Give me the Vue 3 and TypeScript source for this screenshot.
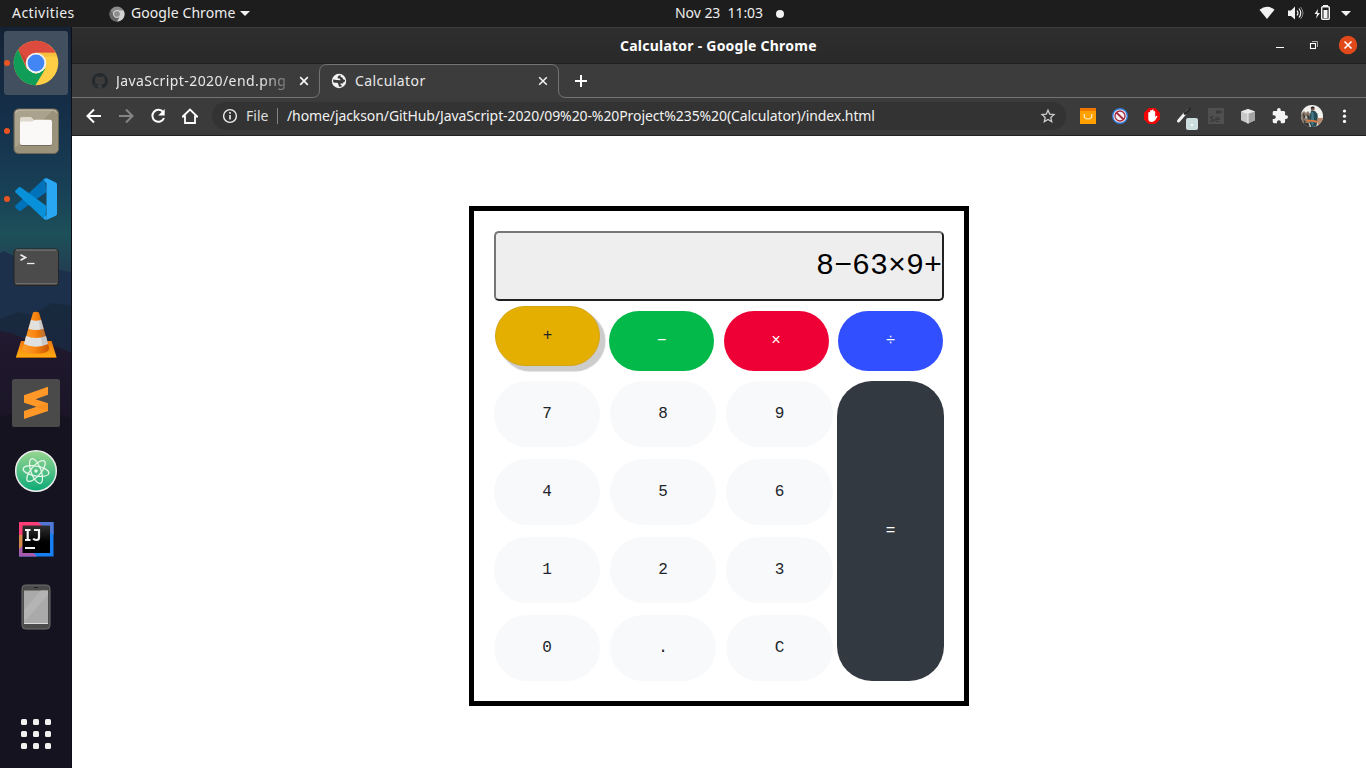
<script setup lang="ts">
import { ref } from 'vue'

interface Operator {
  symbol: string
  tone: string
  raised?: boolean
}

const display = ref<string>('8−63×9+')

const operators: Operator[] = [
  { symbol: '+', tone: 'yellow', raised: true },
  { symbol: '−', tone: 'green' },
  { symbol: '×', tone: 'red' },
  { symbol: '÷', tone: 'blue' },
]

const keys: string[] = ['7', '8', '9', '4', '5', '6', '1', '2', '3', '0', '.', 'C']

function press(key: string): void {
  display.value = key === 'C' ? '' : display.value + key
}
</script>

<template>
  <div class="desktop">
    <header class="topbar">
      <span class="activities">Activities</span>
      <svg class="app-icon" width="16" height="16" viewBox="0 0 16 16">
        <circle cx="8" cy="8" r="7.5" fill="#8b8b8b" />
        <path d="M8 4.5h6.7A7.5 7.5 0 0 1 8 15.5l3-5.700z" fill="#d2d2d2" />
        <path d="M1.600 4A7.500 7.500 0 0 0 8 15.500l3-5.700-6 .2z" fill="#656565" />
        <circle cx="8" cy="8" r="3.500" fill="#8d8d8d" stroke="#ddd" stroke-width="1" />
      </svg>
      <span class="app-name">Google Chrome</span>
      <svg class="caret" width="10" height="5" viewBox="0 0 10 5"><path d="M0 0h10L5 5z" fill="#f2f2f2" /></svg>
      <span class="clock">Nov 23&nbsp; 11:03</span>
      <i class="notice"></i>
      <svg class="tray" width="110" height="27" viewBox="0 0 110 27" fill="#f2f2f2">
        <path d="M3.500 9.800Q11 3.500 18.500 9.800L11 19z" />
        <path d="M32 10.500h3l4-4v13l-4-3.500h-3z" />
        <path d="M41 10.500q2 2.500 0 5M43 8.500q3.500 4.500 0 9" fill="none" stroke="#f2f2f2" stroke-width="1.200" />
        <path d="M44.500 7q5 6 0 12" fill="none" stroke="#858585" />
        <path d="M62 9l-3.500 5H61l-1 4.500 4-5.500h-2.500z" />
        <path d="M67 5.500h5" stroke="#f2f2f2" />
        <rect x="65.700" y="6.700" width="7.600" height="12.600" rx="1" fill="none" stroke="#f2f2f2" stroke-width="1.400" />
        <path d="M67.500 10h4v8h-4zM85 11h10l-5 5z" />
      </svg>
    </header>

    <div class="workspace">
      <nav class="dock">
        <svg class="wallpaper" width="72" height="741" viewBox="0 0 72 741">
          <defs>
            <linearGradient id="sky" x2="0" y2="1">
              <stop offset="0" stop-color="#152235" /><stop offset=".12" stop-color="#152f49" />
              <stop offset=".22" stop-color="#184056" /><stop offset=".28" stop-color="#1d5059" />
              <stop offset=".33" stop-color="#233e52" /><stop offset=".4" stop-color="#292b45" />
              <stop offset=".52" stop-color="#181526" /><stop offset="1" stop-color="#141420" />
            </linearGradient>
            <linearGradient id="hill" x2="0" y2="1"><stop offset="0" stop-color="#172a3d" /><stop offset="1" stop-color="#1c2440" /></linearGradient>
            <linearGradient id="ridge" x2="0" y2="1"><stop offset="0" stop-color="#211a30" /><stop offset=".7" stop-color="#1b1527" /><stop offset="1" stop-color="#151420" /></linearGradient>
          </defs>
          <rect width="72" height="741" fill="url(#sky)" />
          <path d="M0 226l4-2 12 6 12-1 12 9 32 8v60H0z" fill="#1c304b" />
          <path d="M0 292l18-7 14 3 20-12 20 3v70H0z" fill="url(#hill)" />
          <path d="M0 304l12 2 12 6 18 2 30 12v100H0z" fill="url(#ridge)" />
          <path d="M0 390l40-10 32 12v349H0z" fill="#14131f" />
        </svg>

        <div class="slot active running">
          <svg viewBox="0 0 64 64">
            <circle cx="32" cy="32" r="22.300" fill="#ffce44" />
            <path d="M14.200 18.500A22.300 22.300 0 0 1 51.700 21.800H32l-9.500 15.500z" fill="#dd4b3e" />
            <path d="M14.200 18.500A22.300 22.300 0 0 0 31.500 54.300L41.500 37.500 32 43 22.500 37.500z" fill="#0f9d58" />
            <path d="M14.200 18.500l8.500 16.300L22.500 29z" fill="#a93027" opacity=".45" />
            <path d="M32 21.800h19.700l1.300 3.500-15 .5z" fill="#e5ae32" opacity=".45" />
            <circle cx="32" cy="32" r="10.300" fill="#f3f3f3" /><circle cx="32" cy="32" r="8.400" fill="#4285f4" />
          </svg>
        </div>
        <div class="slot running">
          <svg viewBox="0 0 64 64">
            <rect x="10" y="10" width="44.500" height="44.500" rx="4.500" fill="#9b927b" stroke="#6d6655" />
            <path d="M11 15q0-4 4-4h34L11 49z" fill="#aaa28d" />
            <path d="M11.500 14q1-3 4-3h33q3.500 0 4 3" fill="none" stroke="#c8c1ad" />
            <path d="M16 31V20q0-2 2-2h9l3 3v9z" fill="#ded9cc" />
            <path d="M16 24q0-1.500 2-1.500h10l3-1.700h15q2 0 2 2V44q0 2-2 2H18q-2 0-2-2z" fill="#faf9f7" />
            <path d="M17 46.500h30" stroke="#766f5e" />
          </svg>
        </div>
        <div class="slot running">
          <svg viewBox="0 0 64 64">
            <path d="M41 11L11.500 38.500q-1 1 0 2l3 3q1.500.9 2.500 0L42.500 25z" fill="#0072b9" />
            <path d="M41 53L11.500 25.500q-1-1 0-2l3-3q1.500-.9 2.500 0L42.500 39z" fill="#0890d8" />
            <path d="M42.500 53l9.300-4.300q1.200-.7 1.200-2V17.500q0-1.500-1.200-2L42.500 11l-3 1.500 3 4z" fill="#2aa7f3" />
            <path d="M42.500 53l-3-1.500 3-4z" fill="#2aa7f3" />
          </svg>
        </div>
        <div class="slot">
          <svg viewBox="0 0 64 64">
            <rect x="10" y="14" width="44.500" height="36.500" rx="3" fill="#4b4b4b" stroke="#252525" />
            <path d="M12 15h40.500" stroke="#858585" /><path d="M11.500 48.500h41.500" stroke="#6b6b6b" />
            <path d="M16.500 19.800l5 2.700-5 2.700" fill="none" stroke="#eee" stroke-width="1.700" /><path d="M23 28.500h7.500" stroke="#eee" stroke-width="1.300" />
          </svg>
        </div>
        <div class="slot">
          <svg viewBox="0 0 64 64">
            <defs>
              <linearGradient id="cone"><stop stop-color="#ff9c2b" /><stop offset=".45" stop-color="#f88712" /><stop offset="1" stop-color="#c95500" /></linearGradient>
              <linearGradient id="base" x2="0" y2="1"><stop stop-color="#f27a0d" /><stop offset="1" stop-color="#ffae13" /></linearGradient>
            </defs>
            <path d="M17 38h30.500l5 16q0 1-1 1H13q-1 0-1-1z" fill="url(#base)" /><path d="M12 54.500h40" stroke="#bb6900" />
            <path d="M29 9.500q3-1.500 6 0l10 35q1 6-13 6t-13-6z" fill="url(#cone)" />
            <path d="M27 16.700q5 2 10 0l2.600 9q-7.600 2.600-15.200 0z" fill="#e0e0df" />
            <path d="M22 33q10 4 20 0l2 8q-12 5.500-24 0z" fill="#dfe0e0" />
            <path d="M35 17.500l2-.8 7 24.300-6 2z" fill="#8e8e8e" opacity=".28" />
          </svg>
        </div>
        <div class="slot">
          <svg viewBox="0 0 64 64">
            <rect x="8" y="8" width="48" height="48" rx="2.500" fill="#4a4a4a" />
            <path d="M20 24.300L44 15.700v8L31.500 28.300 44 32.300V40L20 48v-8l12.500-4.300L20 31.700z" fill="#ff9827" />
            <path d="M32.500 35.700L44 32.300V38l-4 1z" fill="#e78217" opacity=".35" />
          </svg>
        </div>
        <div class="slot">
          <svg viewBox="0 0 64 64">
            <defs><linearGradient id="atom" x2="0" y2="1"><stop stop-color="#9ad690" /><stop offset="1" stop-color="#0baa78" /></linearGradient></defs>
            <circle cx="32" cy="32" r="20.300" fill="url(#atom)" stroke="#ebedeb" stroke-width="1.500" />
            <g fill="none" stroke="#e7f8e9" stroke-width="1.250"><ellipse cx="32" cy="32" rx="13" ry="5" transform="rotate(10 32 32)" /><ellipse cx="32" cy="32" rx="13" ry="5" transform="rotate(70 32 32)" /><ellipse cx="32" cy="32" rx="13" ry="5" transform="rotate(130 32 32)" /></g>
            <circle cx="32" cy="32" r="1.700" fill="#e7f8e9" />
          </svg>
        </div>
        <div class="slot">
          <svg viewBox="0 0 64 64">
            <defs><linearGradient id="ink" x2="0" y2="1"><stop stop-color="#303030" /><stop offset=".6" stop-color="#000" /></linearGradient></defs>
            <path d="M15 15h34.500v34.500H15z" fill="#167ff2" />
            <path d="M15 15h20l8 10-25 10-3-5z" fill="#fc3d78" /><path d="M34 15h15.500v13z" fill="#5277d5" />
            <path d="M15 28h5v12l-5 8z" fill="#d18a49" /><path d="M15 42l6-5 12 12.500H15z" fill="#a65bae" />
            <path d="M18.500 18.500h27.500v27.500H18.500z" fill="url(#ink)" />
            <path d="M21 23h5.500M23.700 23v10M21 33h5.500M30 23h5v7.500q0 2.500-2.500 2.500t-3.200-1.500M21 41h10" fill="none" stroke="#f4f4f4" stroke-width="2.200" />
          </svg>
        </div>
        <div class="slot">
          <svg viewBox="0 0 64 64">
            <rect x="18" y="10" width="28" height="44" rx="3.500" fill="#4b4b4b" stroke="#6f6f6f" />
            <path d="M20 15.500h24V49H20z" fill="#aaa" /><path d="M20 35L37 15.500h7V20L20 47z" fill="#b4b4b4" /><path d="M20 48.500h24" stroke="#ddd" /><path d="M30 12.500h4" stroke="#222" />
          </svg>
        </div>
        <div class="apps"><i v-for="n in 9" :key="n"></i></div>
      </nav>

      <section class="window">
        <div class="titlebar">
          <h1>Calculator - Google Chrome</h1>
          <svg class="controls" width="96" height="36" viewBox="0 0 96 36">
            <path d="M6 19.500h8" stroke="#fff" />
            <path d="M42 13.500h5.500V19" fill="none" stroke="#aaa" />
            <rect x="40.500" y="15.500" width="5" height="5" fill="none" stroke="#fff" stroke-width="1.100" />
            <circle cx="78" cy="17" r="9.200" fill="#e2491a" />
            <path d="M74.500 13.500l7 7m0-7l-7 7" stroke="#fff" stroke-width="1.600" />
          </svg>
        </div>

        <div class="tabs">
          <svg class="tab-line" width="1294" height="34" viewBox="0 0 1294 34" fill="none" stroke="#747474">
            <path d="M0 33.500H240Q247.500 33.500 247.500 26V8Q247.500.5 255 .5H479Q486.500.5 486.500 8V26Q486.500 33.500 494 33.500H1294" />
          </svg>
          <div class="tab first">
            <svg width="16" height="16" viewBox="0 0 16 16"><path fill="#24292e" d="M8 0C3.600 0 0 3.600 0 8c0 3.500 2.300 6.500 5.500 7.600.4.100.5-.2.500-.4v-1.500c-2.200.5-2.700-.9-2.700-.9-.4-.9-.9-1.200-.9-1.200-.7-.5.100-.5.100-.5.800.1 1.200.8 1.200.8.700 1.200 1.900.9 2.300.7.100-.5.300-.9.500-1.100-1.800-.2-3.600-.9-3.600-4 0-.9.300-1.600.8-2.100-.1-.2-.4-1 .1-2.100 0 0 .7-.2 2.200.8a7.700 7.700 0 0 1 4 0c1.500-1 2.200-.8 2.200-.8.400 1.100.200 1.900.1 2.100.5.600.8 1.300.8 2.100 0 3.100-1.900 3.700-3.600 3.900.3.300.5.800.5 1.500v2.200c0 .2.100.5.600.4A8 8 0 0 0 8 0z" /></svg>
            <span class="label faded">JavaScript-2020/end.png</span>
            <svg class="x" width="10" height="10" viewBox="0 0 10 10"><path d="M1.200 1.200l7.600 7.600m0-7.600L1.200 8.800" stroke="#f4f4f4" stroke-width="1.700" /></svg>
          </div>
          <div class="tab current">
            <svg width="16" height="16" viewBox="0 0 16 16"><circle cx="8" cy="8" r="7.200" fill="#f4f4f4" /><path d="M9.500 2Q6.500 2.500 6.500 5.200q3-.2 3 2.100Q6 7 2.200 6.500q-.3 1.800.300 3 2 .3 3.500.2 1.500.5 1.500 2.300l.5 1.800q2 .2 3.500-.8-2.500-.8-2-2.500h2.500q.3-2 2-2V7q-2.500-.5-2.500-2.500-2.500.3-2-2.500z" fill="#3c3c3c" /></svg>
            <span class="label">Calculator</span>
            <svg class="x" width="10" height="10" viewBox="0 0 10 10"><path d="M1.200 1.200l7.600 7.600m0-7.600L1.200 8.800" stroke="#f4f4f4" stroke-width="1.500" /></svg>
          </div>
          <svg class="plus" width="14" height="14" viewBox="0 0 14 14"><path d="M7 1v12M1 7h12" stroke="#fff" stroke-width="2" /></svg>
        </div>

        <div class="toolbar">
          <div class="tool"><svg viewBox="0 0 16 16" fill="none" stroke="#fff" stroke-width="2"><path d="M15 8H2M8 1.500L1.500 8 8 14.500" /></svg></div>
          <div class="tool"><svg viewBox="0 0 16 16" fill="none" stroke="#858585" stroke-width="2"><path d="M1 8h13M8 1.500L14.500 8 8 14.500" /></svg></div>
          <div class="tool"><svg viewBox="0 0 16 16"><path d="M13.200 4.200A6 6 0 1 0 14 10" fill="none" stroke="#fff" stroke-width="2" /><path d="M14.700 1v6.500H8.200z" fill="#fff" /></svg></div>
          <div class="tool"><svg viewBox="0 0 16 16"><path d="M.8 8.500L8 1.500l7.200 7H13V15H3V8.500z" fill="none" stroke="#fff" stroke-width="1.800" /></svg></div>
          <div class="address">
            <svg width="16" height="16" viewBox="0 0 16 16"><circle cx="8" cy="8" r="6.400" fill="none" stroke="#f0f0f0" stroke-width="1.400" /><path d="M8 7v4.500M8 4v1.700" stroke="#f0f0f0" stroke-width="1.600" /></svg>
            <span class="scheme">File</span>
            <span class="url">/home/jackson/GitHub/JavaScript-2020/09%20-%20Project%235%20(Calculator)/index.html</span>
            <svg class="star" width="16" height="16" viewBox="0 0 16 16"><path d="M8 2.200l1.700 3.900 4.300.4-3.200 2.900.9 4.200L8 11.400l-3.700 2.200.9-4.200L2 6.500l4.300-.4z" fill="none" stroke="#ccc" stroke-width="1.300" /></svg>
          </div>
          <div class="tool"><svg viewBox="0 0 16 16"><path d="M0 0h16v16H0z" fill="#ff9f00" /><path d="M0 0h16v3H0z" fill="#ef7600" /><path d="M4.200 6v1.800q0 3.200 3.800 3.200t3.800-3.200V6" fill="none" stroke="#fff1c7" stroke-width="1.200" /></svg></div>
          <div class="tool"><svg viewBox="0 0 16 16"><circle cx="8" cy="8" r="7.300" fill="#f6eef1" stroke="#347bd7" stroke-width="1.400" /><circle cx="8" cy="8" r="5" fill="none" stroke="#9d2944" stroke-width="1.300" /><path d="M4.300 4.300l7.400 7.400" stroke="#a32138" stroke-width="1.800" /></svg></div>
          <div class="tool"><svg viewBox="0 0 16 16"><path d="M4.700 0h6.600L16 4.700v6.600L11.300 16H4.700L0 11.300V4.700z" fill="#f40505" /><path d="M4.300 8.500V5q0-1 .9-1t.9 1V3q0-1 .9-1t.9 1v-.7q0-.9.900-.9t.8.900V4q0-.9.800-.9t.8.900v5l1-1q1.200-.6 1.200.4l-2 3.600q-1.500 2-3.800 2-3.300 0-3.300-3.500z" fill="#fff" /></svg></div>
          <div class="tool"><svg class="wide" viewBox="0 0 32 32"><path d="M10.500 21l6.500-7.500" stroke="#f2f2f2" stroke-width="3" stroke-linecap="round" /><path d="M17 13.500l4.500-4.500" stroke="#272727" stroke-width="2.800" stroke-linecap="round" /><path d="M17.300 11.800l3.200-3" stroke="#777" stroke-width=".8" /><rect x="18" y="18" width="12" height="12" rx="2" fill="#cbdddd" /><circle cx="24" cy="25" r="1.100" fill="#fff" /></svg></div>
          <div class="tool"><svg viewBox="0 0 16 16"><path d="M0 0h16v16H0z" fill="#505050" /><path d="M8 2.500h4v1.200L14 2.500v3l-2-1.200v1.200H8z" fill="#3a3a3a" /><text x="1.200" y="14" class="selenium">Se</text></svg></div>
          <div class="tool"><svg viewBox="0 0 16 16"><path d="M1 3.500L8 1l7 2.500v8.800L8 15.500l-7-3.200z" fill="#c8c8c8" /><path d="M1 3.500L8 1l7 2.500L8 6z" fill="#e9e9e9" /><path d="M8 6l7-2.500v8.800L8 15.500z" fill="#a4a4a4" /><path d="M8 6v9.500" stroke="#f3f3f3" /></svg></div>
          <div class="tool"><svg viewBox="1 1 22 22"><path fill="#f4f4f4" d="M20.500 11H19V7c0-1.100-.9-2-2-2h-4V3.500a2.500 2.500 0 0 0-5 0V5H4a2 2 0 0 0-2 2v3.800h1.500a2.700 2.700 0 0 1 0 5.400H2V20c0 1.100.9 2 2 2h3.800v-1.500a2.700 2.700 0 0 1 5.400 0V22H17a2 2 0 0 0 2-2v-4h1.500a2.500 2.500 0 0 0 0-5z" /></svg></div>
          <div class="tool">
            <svg class="avatar" viewBox="0 0 22 22">
              <defs><clipPath id="face"><circle cx="11" cy="11" r="11" /></clipPath></defs>
              <g clip-path="url(#face)"><path d="M0 0h22v22H0z" fill="#f2f1ee" /><path d="M0 9l3-3 2 2 2-2 3 4-2 12H0z" fill="#8b7b6c" /><path d="M2 8l3 4-3 2 3 3-2 1zM6 9l3 3-2 3z" fill="#32383a" /><path d="M4 11l2 1-1 2z" fill="#eeeae2" /><path d="M10 5.500l4 .5 2.500 3 .5 6-2 7h-5L8 15z" fill="#254b55" /><path d="M10.500 6.500l2 1 .5 8-1 6-2-4z" fill="#45788a" /><path d="M5 15q6-1 12 1l-1 2q-5-2-10-1z" fill="#d77a42" /><path d="M16 13h6v4l-5 4z" fill="#b98b6c" /><circle cx="11.700" cy="3.700" r="2" fill="#79584b" /><path d="M9.700 2.500q2.500-2 4 .5l-3.500.5z" fill="#252527" /><path d="M3 18l4 0 2 4H3z" fill="#303134" /></g>
            </svg>
          </div>
          <div class="tool"><svg viewBox="0 0 16 16" fill="#fff"><circle cx="8.500" cy="3" r="1.600" /><circle cx="8.500" cy="8.200" r="1.600" /><circle cx="8.500" cy="13.400" r="1.600" /></svg></div>
        </div>

        <main class="page">
          <div class="calculator">
            <div class="screen">{{ display }}</div>
            <div class="operators">
              <button v-for="op in operators" :key="op.symbol" :class="['operator', op.tone, { raised: op.raised }]" @click="press(op.symbol)">{{ op.symbol }}</button>
            </div>
            <div class="lower">
              <div class="keys"><button v-for="key in keys" :key="key" class="key" @click="press(key)">{{ key }}</button></div>
              <button class="equals">=</button>
            </div>
          </div>
        </main>
      </section>
    </div>
  </div>
</template>

<style>
body { margin: 0; overflow: hidden; }
</style>

<style scoped>
* { box-sizing: border-box; }
.desktop { width: 1366px; height: 768px; display: flex; flex-direction: column; font: 14px/20px "Noto Sans", sans-serif; color: #eee; white-space: nowrap; overflow: hidden; }
.topbar { height: 27px; flex: none; background: #1d1d1d; display: flex; align-items: center; padding-left: 12px; }
.topbar span { padding-bottom: 1px; }
.activities { width: 97px; letter-spacing: .44px; }
.app-icon { flex: none; margin-right: 6px; }
.app-name { width: 104px; letter-spacing: .08px; }
.caret { margin-left: 5px; width: 10px; }
.clock { margin-left: 425px; width: 89px; letter-spacing: -.05px; }
.notice { width: 8px; height: 8px; border-radius: 50%; background: #f2f2f2; margin-left: 12px; }
.tray { margin-left: auto; margin-right: 0; }
.workspace { flex: 1; min-height: 0; display: flex; }
.dock { width: 72px; position: relative; display: flex; flex-direction: column; gap: 4px; padding: 4px; border-right: 1px solid #0d0e16; overflow: hidden; flex: none; }
.wallpaper { position: absolute; inset: 0; }
.slot { width: 64px; height: 64px; flex: none; position: relative; border-radius: 3px; }
.slot svg { width: 64px; height: 64px; display: block; }
.slot.active { background: #424f5e; }
.running::before { content: ""; position: absolute; left: 0; top: 29px; width: 6px; height: 6px; border-radius: 50%; background: #e95420; }
.apps { position: relative; margin: auto auto 15px 17px; display: grid; grid-template-columns: repeat(3, 6px); gap: 6px; }
.apps i { width: 6px; height: 6px; border-radius: 1.5px; background: #f1f1ef; }
.window { flex: 1; display: flex; flex-direction: column; min-width: 0; }
.titlebar { height: 37px; flex: none; display: flex; align-items: center; background: linear-gradient(#2e2e2e, #292929); border-top: 1px solid #3b3b3b; border-bottom: 1px solid #202020; }
h1 { margin: 0 0 0 548px; font-size: 14px; line-height: 20px; font-weight: 700; letter-spacing: .23px; color: #fff; }
.controls { margin-left: auto; }
.tabs { height: 34px; flex: none; background: #3c3c3c; position: relative; display: flex; align-items: center; }
.tab-line { position: absolute; left: 0; top: 0; }
.tab { display: flex; align-items: center; height: 34px; }
.first { width: 247px; padding-left: 20px; }
.current { width: 240px; padding-left: 12px; }
.label { margin-left: 8px; color: #e8e8e8; letter-spacing: .42px; }
.faded { width: 174px; overflow: hidden; -webkit-mask-image: linear-gradient(90deg, #000 145px, transparent 180px); mask-image: linear-gradient(90deg, #000 145px, transparent 180px); }
.first .x { margin-left: 9px; }
.current .x { margin-left: auto; margin-right: 11px; }
.plus { margin-left: 15px; }
.toolbar { height: 38px; flex: none; background: #3b3b3b; border-bottom: 1px solid #202020; display: flex; align-items: flex-start; padding: 4px 6px 0; }
.tool { width: 32px; height: 28px; display: flex; align-items: center; justify-content: center; flex: none; }
.tool svg { width: 16px; height: 16px; flex: none; }
.tool .wide { width: 32px; height: 32px; }
.tool .avatar { width: 22px; height: 22px; }
.selenium { font: bold 9.5px "Open Sans", sans-serif; fill: #3a3a3a; }
.address { width: 854px; height: 28px; border-radius: 14px; background: #333; margin: 0 6px; display: flex; align-items: center; padding: 0 10px; }
.scheme { width: 32px; margin-left: 8px; border-right: 1px solid #858585; line-height: 16px; color: #ddd; }
.url { margin-left: 9px; color: #f1f1f1; letter-spacing: -.095px; }
.star { margin-left: auto; }
.page { flex: 1; background: #fff; display: flex; align-items: flex-start; justify-content: center; padding-top: 70px; }
.calculator { width: 500px; height: 500px; border: 5px solid #000; padding: 20px; font-family: "Liberation Mono", monospace; }
.screen { height: 70px; border: 2px solid; border-color: #767676 #212121 #212121 #767676; border-radius: 5px; background: #eee; color: #000; font-size: 30px; line-height: 66px; text-align: right; }
button { border: 0; padding: 0; font: 16px/24px "Liberation Mono", monospace; }
.operators { display: flex; justify-content: space-between; padding: 10px 1px; }
.operator { width: 105px; height: 60px; border-radius: 30px; color: #fff; padding-bottom: 1px; }
.yellow { background: #e4af00; color: #212529; border: 1px solid #d5a411; }
.green { background: #03b94a; }
.red { background: #ee0037; }
.blue { background: #314eff; }
.raised { transform: translateY(-5px); box-shadow: 5px 5px 1px 0.5px #ccc; }
.lower { display: flex; justify-content: space-between; }
.keys { width: 339px; display: grid; grid-template-columns: 106px 106px 107px; column-gap: 10px; row-gap: 12px; }
.key { height: 66px; border-radius: 33px; background: #f8f9fb; color: #212529; }
.equals { width: 107px; height: 300px; border-radius: 35px; background: #333940; color: #fff; }
</style>
